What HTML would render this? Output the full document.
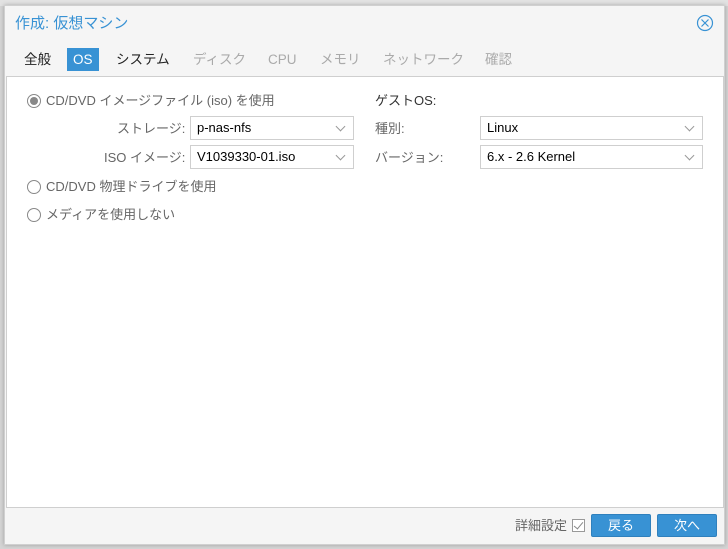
<!DOCTYPE html>
<html><head><meta charset="utf-8"><style>
*{box-sizing:border-box;margin:0;padding:0}
body{width:728px;height:549px;overflow:hidden;background:#d4d4d4;font-family:"Liberation Sans","Noto Sans CJK JP",sans-serif;font-size:13px;position:relative}
.topbar{position:absolute;left:0;top:0;width:728px;height:6px;background:#e2e2e2}
.dlg{position:absolute;left:4px;top:5px;width:721px;height:540px;background:#f5f5f5;border:1px solid #d0d0d0;box-shadow:0 0 4px rgba(0,0,0,.25)}
.title{position:absolute;left:10px;top:8px;color:#3892d4;font-size:15px;line-height:20px}
.close{position:absolute;left:691px;top:8px}
.tab{position:absolute;top:42px;height:23px;line-height:23px;font-size:13.5px;color:#222}
.tab.dis{color:#aaa}
.tab.act{background:#3892d4;color:#fff;padding:0 6px}
.panel{position:absolute;left:1px;top:70px;width:718px;height:432px;background:#fff;border:1px solid #cfcfcf}
.t{position:absolute;font-size:13px;color:#666;white-space:nowrap;line-height:16px}
.rad{position:absolute;width:14px;height:14px;border:1px solid #888;border-radius:50%;background:#fff}
.rad.on::after{content:"";position:absolute;left:2px;top:2px;width:8px;height:8px;border-radius:50%;background:#888}
.sel{position:absolute;height:24px;border:1px solid #cfcfcf;background:#fff;color:#000;font-size:13px;line-height:22px;padding-left:6px}
.sel::after{content:"";position:absolute;right:9px;top:6px;width:6px;height:6px;border-right:1px solid #999;border-bottom:1px solid #999;transform:rotate(45deg)}
.btn{position:absolute;top:508px;width:60px;height:23px;background:#3892d4;border:1px solid #2f80bd;border-radius:2px;color:#fff;text-align:center;line-height:21px;font-size:13px}
</style></head><body>
<div class="topbar"></div>
<div class="dlg">
<div class="title">作成: 仮想マシン</div>
<svg class="close" width="18" height="18" viewBox="0 0 18 18"><circle cx="9" cy="9" r="7.5" fill="none" stroke="#3892d4" stroke-width="1.2"/><path d="M5.5 5.5L12.5 12.5M12.5 5.5L5.5 12.5" stroke="#3892d4" stroke-width="1.2"/></svg>
<div class="tab" style="left:19px">全般</div>
<div class="tab act" style="left:62px">OS</div>
<div class="tab" style="left:111px">システム</div>
<div class="tab dis" style="left:188px">ディスク</div>
<div class="tab dis" style="left:263px">CPU</div>
<div class="tab dis" style="left:315px">メモリ</div>
<div class="tab dis" style="left:378px">ネットワーク</div>
<div class="tab dis" style="left:480px">確認</div>
<div class="panel"></div>
<div class="rad on" style="left:22px;top:88px"></div>
<div class="t" style="left:41px;top:87px">CD/DVD イメージファイル (iso) を使用</div>
<div class="t" style="left:112px;top:115px">ストレージ:</div>
<div class="sel" style="left:185px;top:110px;width:164px">p-nas-nfs</div>
<div class="t" style="left:99px;top:144px">ISO イメージ:</div>
<div class="sel" style="left:185px;top:139px;width:164px">V1039330-01.iso</div>
<div class="rad" style="left:22px;top:174px"></div>
<div class="t" style="left:41px;top:173px">CD/DVD 物理ドライブを使用</div>
<div class="rad" style="left:22px;top:202px"></div>
<div class="t" style="left:41px;top:201px">メディアを使用しない</div>
<div class="t" style="left:370px;top:87px;color:#333">ゲストOS:</div>
<div class="t" style="left:370px;top:115px">種別:</div>
<div class="sel" style="left:475px;top:110px;width:223px">Linux</div>
<div class="t" style="left:370px;top:144px">バージョン:</div>
<div class="sel" style="left:475px;top:139px;width:223px">6.x - 2.6 Kernel</div>
<div class="t" style="left:510px;top:512px">詳細設定</div>
<div style="position:absolute;left:567px;top:513px;width:13px;height:13px;border:1px solid #999;background:#fff"><div style="position:absolute;left:3px;top:0px;width:5px;height:9px;border-right:1.5px solid #888;border-bottom:1.5px solid #888;transform:rotate(40deg)"></div></div>
<div class="btn" style="left:586px">戻る</div>
<div class="btn" style="left:652px">次へ</div>
</div>
</body></html>
